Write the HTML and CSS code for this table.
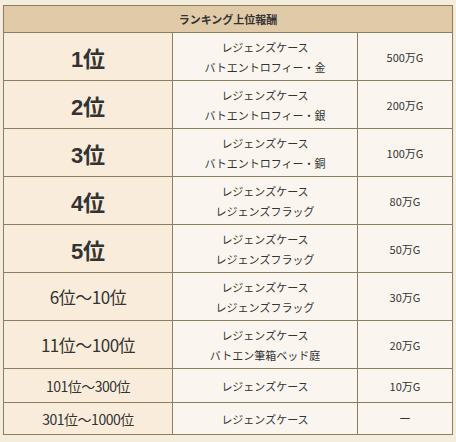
FILE: index.html
```html
<!DOCTYPE html>
<html lang="ja">
<head>
<meta charset="utf-8">
<link rel="stylesheet" href="styles.css">
</head>
<body>
<table class="reward">
<colgroup><col class="c1"><col class="c2"><col class="c3"></colgroup>
<thead>
<tr><th colspan="3" class="head">ランキング上位報酬</th></tr>
</thead>
<tbody>
<tr class="tall"><td class="rank big">1位</td><td class="item">レジェンズケース<br>バトエントロフィー・金</td><td class="prize">500万G</td></tr>
<tr class="tall"><td class="rank big">2位</td><td class="item">レジェンズケース<br>バトエントロフィー・銀</td><td class="prize">200万G</td></tr>
<tr class="tall"><td class="rank big">3位</td><td class="item">レジェンズケース<br>バトエントロフィー・銅</td><td class="prize">100万G</td></tr>
<tr class="tall"><td class="rank big">4位</td><td class="item">レジェンズケース<br>レジェンズフラッグ</td><td class="prize">80万G</td></tr>
<tr class="tall"><td class="rank big">5位</td><td class="item">レジェンズケース<br>レジェンズフラッグ</td><td class="prize">50万G</td></tr>
<tr class="tall"><td class="rank mid">6位～10位</td><td class="item">レジェンズケース<br>レジェンズフラッグ</td><td class="prize">30万G</td></tr>
<tr class="tall"><td class="rank mid">11位～100位</td><td class="item">レジェンズケース<br>バトエン筆箱ベッド庭</td><td class="prize">20万G</td></tr>
<tr class="short"><td class="rank small">101位～300位</td><td class="item">レジェンズケース</td><td class="prize">10万G</td></tr>
<tr class="short last"><td class="rank small">301位～1000位</td><td class="item">レジェンズケース</td><td class="prize dash">ー</td></tr>
</tbody>
</table>
</body>
</html>
```
FILE: styles.css
```css
html, body {
  margin: 0;
  background: #f4ecdc;
}
body {
  padding: 5px 0 0 3px;
  font-family: "Noto Sans CJK JP", "Liberation Sans", sans-serif;
  color: #333;
}
.reward {
  border-collapse: collapse;
  table-layout: fixed;
  width: 449px;
  border: 1px solid #8a7f5f;
}
.c1 { width: 169px; }
.c2 { width: 185px; }
.c3 { width: 95px; }
.reward th, .reward td {
  border: 1px solid #8a7f5f;
  padding: 0;
  text-align: center;
  vertical-align: middle;
}
.head {
  background: #e1caa7;
  height: 26px;
  font-size: 11px;
  font-weight: bold;
  color: #333;
}
.tall td { height: 47px; }
.short td { height: 33px; }
.last td { height: 31px; }
.rank {
  background: #f9ecda;
  color: #333;
}
.big {
  font-family: "Liberation Sans", "Noto Sans CJK JP", sans-serif;
  font-size: 22px;
  font-weight: bold;
}
.mid {
  font-size: 17px;
  letter-spacing: -0.5px;
}
.small {
  font-size: 14px;
  letter-spacing: -0.5px;
}
.item, .prize {
  background: #faf6ef;
  font-size: 11px;
  line-height: 20px;
  color: #333;
}
.dash {
  font-size: 12px;
}
```
